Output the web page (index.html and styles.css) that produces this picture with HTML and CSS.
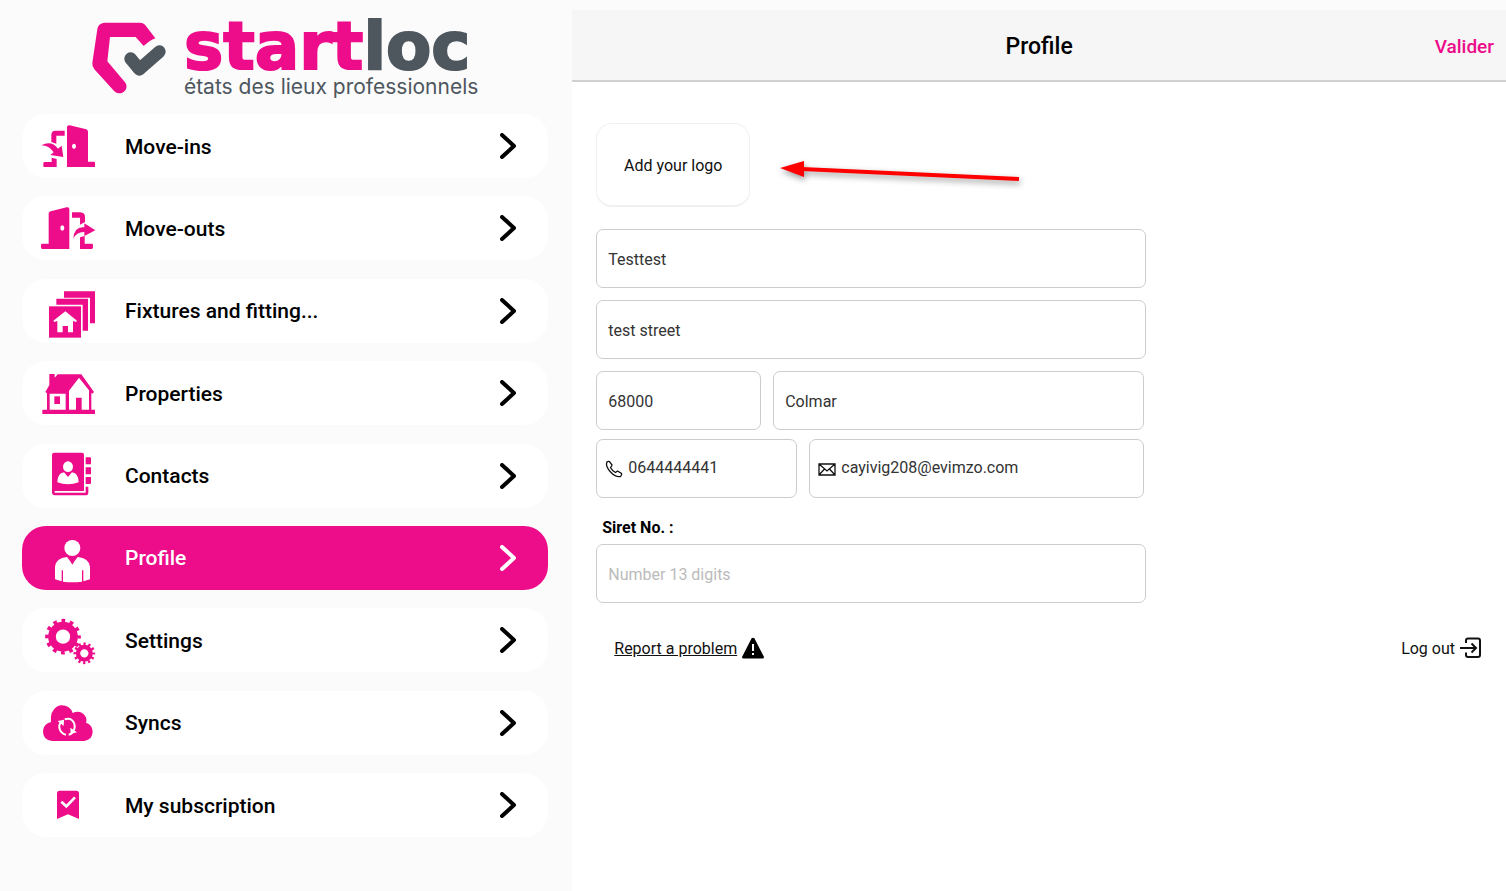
FILE: index.html
```html
<!DOCTYPE html>
<html lang="en">
<head>
  <meta charset="UTF-8">
  <meta name="viewport" content="width=device-width, initial-scale=1.0">
  <title>Startloc - Profile</title>
  <link rel="stylesheet" href="styles.css">
</head>
<body>
  <div class="app">
    <aside class="sidebar">
      <div class="logo">
        <svg class="logo-mark" viewBox="26 36 222 216" aria-hidden="true">
          <path class="pink" d="M63 38H170Q179 38 185 44L216 85Q203 89 181 108L157 81H80L72 154L125 217Q133 228 127 239Q120 250 107 250Q99 250 93 244L33 178Q26 170 27 158L42 58Q44 40 63 38Z"/>
          <path d="M142 146L168 178L228 125" fill="none" stroke="#4e565e" stroke-width="38" stroke-linecap="round" stroke-linejoin="round"/>
        </svg>
        <div class="logo-text">
          <div class="logo-name">start<span>loc</span></div>
          <div class="logo-tagline">états des lieux professionnels</div>
        </div>
      </div>

      <nav class="menu">
        <a href="#" class="menu-item">
          <svg class="menu-icon" viewBox="54 12 180 192">
            <path d="M141 51Q142 45 149 46L199 58Q204 60 204 65V155H222Q225 155 225 159V171H141Z"/>
            <path d="M94 96V75Q94 62 107 62H134V77H109V101Z"/>
            <path d="M64 106Q94 90 114 116L125 107L130 141L91 135L101 127Q87 106 64 106Z"/>
            <path d="M95 143L110 147V171H72Q70 171 70 168V159Q70 156 74 156H95Z"/>
            <ellipse class="hole" cx="162" cy="109" rx="6" ry="8"/>
          </svg>
          <span class="menu-label">Move-ins</span>
          <svg class="chevron" viewBox="0 0 16 26"><path d="M2 2L14 13L2 24"/></svg>
        </a>
        <a href="#" class="menu-item">
          <svg class="menu-icon" viewBox="54 259 180 192">
            <path d="M86 311Q87 307 92 305L140 293Q148 291 148 299V418H67Q63 418 63 413V406Q63 402 67 402H86Z"/>
            <path d="M156 308H181Q195 309 195 322V337L180 345V324H156Z"/>
            <path d="M160 387Q162 350 193 353V341L226 362L193 379V367Q170 366 160 387Z"/>
            <path d="M180 383L194 379V402H215Q219 402 219 406V413Q219 418 215 418H180Z"/>
            <ellipse class="hole" cx="127" cy="355" rx="6" ry="8"/>
          </svg>
          <span class="menu-label">Move-outs</span>
          <svg class="chevron" viewBox="0 0 16 26"><path d="M2 2L14 13L2 24"/></svg>
        </a>
        <a href="#" class="menu-item">
          <svg class="menu-icon" viewBox="54 12 180 192">
            <path d="M132 49H225V145H210V68H132Z"/>
            <path d="M109 71H204V167H188V89H109Z"/>
            <path d="M87 94H183V188H87Z"/>
            <path class="hole" d="M136 109L171 137L168 141L159 138V172H144V153H128V172H112V138L103 141L100 137Z"/>
          </svg>
          <span class="menu-label">Fixtures and fitting...</span>
          <svg class="chevron" viewBox="0 0 16 26"><path d="M2 2L14 13L2 24"/></svg>
        </a>
        <a href="#" class="menu-item">
          <svg class="menu-icon" viewBox="54 259 180 192">
            <path d="M88 298H104V309L113 299H184L222 352L217 357L214 354V405H225V418H67V405H81V356L76 352L88 331Z"/>
            <path class="hole" d="M89 357H137V405H89ZM177 309L207 347V405H185V369H168V405H147V348Z"/>
            <path d="M103 365H120V388H103Z"/>
          </svg>
          <span class="menu-label">Properties</span>
          <svg class="chevron" viewBox="0 0 16 26"><path d="M2 2L14 13L2 24"/></svg>
        </a>
        <a href="#" class="menu-item">
          <svg class="menu-icon" viewBox="54 11 180 192">
            <path d="M103 37H186Q192 37 192 43V152H104V157H197V139H205V158Q205 165 198 165H105Q96 165 96 156V44Q96 37 103 37Z"/>
            <path d="M197 51H210Q213 51 213 54V72H197ZM197 81H213V102H197ZM197 110H213V128Q213 131 210 131H197Z"/>
            <ellipse class="hole" cx="144" cy="79" rx="15" ry="16"/>
            <path class="hole" d="M112 126Q112 99 132 96L144 110L156 96Q176 99 176 126Q144 138 112 126Z"/>
          </svg>
          <span class="menu-label">Contacts</span>
          <svg class="chevron" viewBox="0 0 16 26"><path d="M2 2L14 13L2 24"/></svg>
        </a>
        <a href="#" class="menu-item active">
          <svg class="menu-icon" viewBox="54 258 180 192">
            <circle cx="157" cy="324" r="24"/>
            <path d="M105 418V380Q107 355 141 351Q150 362 157 374Q164 362 173 351Q207 355 210 380V418L190 424V391H186V425Q157 429 129 425V391H125V424Z"/>
          </svg>
          <span class="menu-label">Profile</span>
          <svg class="chevron" viewBox="0 0 16 26"><path d="M2 2L14 13L2 24"/></svg>
        </a>
        <a href="#" class="menu-item">
          <svg class="menu-icon gears" viewBox="54 11 180 192">
            <circle cx="129" cy="97" r="33" stroke-width="23"/>
            <circle cx="129" cy="97" r="48" stroke-width="11" pathLength="24" stroke-dasharray="0.9 1.1" stroke-dashoffset="0.45"/>
            <circle cx="193" cy="147" r="19" stroke-width="13"/>
            <circle cx="193" cy="147" r="28" stroke-width="9" pathLength="24" stroke-dasharray="0.9 1.1" stroke-dashoffset="0.45"/>
          </svg>
          <span class="menu-label">Settings</span>
          <svg class="chevron" viewBox="0 0 16 26"><path d="M2 2L14 13L2 24"/></svg>
        </a>
        <a href="#" class="menu-item">
          <svg class="menu-icon" viewBox="54 258 180 192">
            <path d="M96 408Q69 406 69 379Q70 357 93 351Q89 319 110 305Q127 296 145 306Q155 313 158 324Q181 314 195 332Q202 342 198 353Q217 359 218 379Q218 404 193 408Z"/>
            <path class="sync" d="M138 389A24 24 0 0 1 122 352M134 343Q155 336 163 356M146 389Q154 388 160 380M163 356Q166 366 162 376"/>
            <path class="hole" d="M113 348L132 344L131 363ZM171 382L152 387L151 368Z"/>
          </svg>
          <span class="menu-label">Syncs</span>
          <svg class="chevron" viewBox="0 0 16 26"><path d="M2 2L14 13L2 24"/></svg>
        </a>
        <a href="#" class="menu-item">
          <svg class="menu-icon" viewBox="54 25 180 192">
            <path d="M119 78H169Q177 78 177 86V163L144 149L111 163V86Q111 78 119 78Z"/>
            <path class="tick" d="M124 111L139 125L165 98"/>
          </svg>
          <span class="menu-label">My subscription</span>
          <svg class="chevron" viewBox="0 0 16 26"><path d="M2 2L14 13L2 24"/></svg>
        </a>
      </nav>
    </aside>

    <main class="main">
      <header class="header">
        <h1>Profile</h1>
        <button type="submit" form="profile-form" class="btn-submit">Valider</button>
      </header>

      <div class="content">
        <div class="logo-row">
          <button type="button" class="btn-logo">Add your logo</button>
          <svg class="arrow" viewBox="0 0 244 40" aria-hidden="true">
            <path d="M22 13L239 23" stroke="#f00" stroke-width="4"/>
            <path d="M0 12L24 5V21Z" fill="#f00"/>
          </svg>
        </div>

        <form id="profile-form" class="profile-form">
          <input type="text" class="field" name="name" aria-label="Name" value="Testtest">
          <input type="text" class="field" name="street" aria-label="Street" value="test street">
          <div class="form-row city-row">
            <input type="text" class="field" name="zip" aria-label="Zip code" value="68000">
            <input type="text" class="field" name="city" aria-label="City" value="Colmar">
          </div>
          <div class="form-row contact-row">
            <label class="field icon-field">
              <svg viewBox="0 0 18 18"><path d="M2 2Q3 1 4.500 1.500L7 5Q7 6 5.500 7.500Q7 10.500 10.500 12.500L12.500 11L16.500 13.500Q17 15 15.500 16.500Q11 17.500 6 12.500Q0 6.500 2 2Z"/></svg>
              <input type="tel" name="phone" aria-label="Phone" value="0644444441">
            </label>
            <label class="field icon-field">
              <svg viewBox="0 0 18 18"><path d="M1 4H17V15H1ZM1 4L9 11L17 4M1 15L6.500 9M17 15L11.500 9"/></svg>
              <input type="email" name="email" aria-label="Email" value="cayivig208@evimzo.com">
            </label>
          </div>
          <label class="siret-label" for="siret">Siret No. :</label>
          <input type="text" class="field" id="siret" name="siret" placeholder="Number 13 digits">
        </form>

        <div class="actions">
          <a href="#" class="report">
            <span>Report a problem</span>
            <svg viewBox="0 0 22 22"><path d="M9.500 1.500Q11 0 12.500 1.500L22 20Q22 21.500 20.500 21.500H1.500Q0 21.500 0 20Z"/><path d="M11 7V14M11 16V18" stroke="#fff" stroke-width="2"/></svg>
          </a>
          <button type="button" class="logout">
            <span>Log out</span>
            <svg viewBox="0 0 22 22"><path d="M6 6V3.500Q6 1.500 8 1.500H18Q20 1.500 20 3.500V18Q20 20 18 20H8Q6 20 6 18V15.500M0 11H16M11.500 6.500L16 11L11.500 15.500"/></svg>
          </button>
        </div>
      </div>
    </main>
  </div>
</body>
</html>
```
FILE: styles.css
```css
* {
  box-sizing: border-box;
}
body {
  margin: 0;
  font-family: Roboto, sans-serif;
  font-size: 16px;
  color: #111;
  background-color: #fbfbfb;
}
button {
  font-family: inherit;
  border: none;
  background: none;
  padding: 0;
  cursor: pointer;
}
.app {
  display: grid;
  grid-template-columns: 38% 1fr;
  min-height: 100vh;
  padding-top: 10px;
}

/* sidebar */
.sidebar {
  display: flex;
  flex-direction: column;
  padding: 10px 24px 54px 22px;
}
.logo {
  display: flex;
  justify-content: center;
  gap: 18px;
  height: 94px;
}
.logo-mark {
  width: 74px;
  height: 72px;
  margin-top: 2px;
}
.pink {
  fill: #ed0c8a;
}
.logo-name {
  font-family: "DejaVu Sans", sans-serif;
  font-size: 66px;
  font-weight: 700;
  line-height: 54px;
  color: #ed0c8a;
  -webkit-text-stroke: 2px #ed0c8a;
}
.logo-name span {
  color: #4e565e;
  -webkit-text-stroke-color: #4e565e;
}
.logo-tagline {
  font-family: Inter, sans-serif;
  font-size: 21px;
  line-height: 26px;
  color: #4e565e;
  white-space: nowrap;
}
.menu {
  flex: 1;
  display: flex;
  flex-direction: column;
  justify-content: space-between;
}
.menu-item {
  display: flex;
  align-items: center;
  height: 64px;
  padding: 0 32px 0 16px;
  border-radius: 24px;
  background-color: #fff;
  color: #000;
  font-size: 21px;
  font-weight: 500;
  text-decoration: none;
}
.menu-icon {
  width: 60px;
  height: 64px;
  margin-right: 27px;
  fill: #ed0c8a;
}
.menu-icon .hole {
  fill: #fff;
}
.gears {
  fill: none;
  stroke: #ed0c8a;
}
.menu-icon .sync {
  fill: none;
  stroke: #fff;
  stroke-width: 6;
}
.menu-icon .tick {
  fill: none;
  stroke: #fff;
  stroke-width: 8;
}
.menu-label {
  flex: 1;
  padding-top: 1px;
}
.chevron {
  width: 16px;
  height: 26px;
  fill: none;
  stroke: #000;
  stroke-width: 4;
  stroke-linecap: round;
  stroke-linejoin: round;
}
.active {
  background-color: #ed0c8a;
  color: #fff;
}
.active .menu-icon {
  fill: #fff;
}
.active .chevron {
  stroke: #fff;
}

/* main */
.main {
  background-color: #fff;
}
.header {
  display: grid;
  grid-template-columns: 1fr auto 1fr;
  align-items: center;
  height: 72px;
  padding: 3px 12px 0;
  background-color: #f6f6f6;
  border-bottom: 2px solid #d0d0d0;
}
.header h1 {
  grid-column: 2;
  margin: 0;
  font-size: 23px;
  font-weight: 500;
  color: #000;
}
.btn-submit {
  justify-self: end;
  font-size: 19px;
  font-weight: 500;
  color: #ed0c8a;
}
.content {
  padding: 41px 24px;
}
.logo-row {
  display: flex;
  align-items: center;
  gap: 30px;
  margin-bottom: 22px;
}
.btn-logo {
  width: 154px;
  height: 84px;
  padding-top: 2px;
  border: 1px solid #f0f0f0;
  border-bottom-width: 2px;
  border-radius: 16px;
  font-size: 16px;
  color: #111;
}
.arrow {
  width: 244px;
  height: 40px;
  margin-top: 22px;
  filter: drop-shadow(1px 3px 3px rgba(0, 0, 0, 0.4));
}
.profile-form {
  max-width: 550px;
}
.field {
  display: block;
  width: 100%;
  height: 59px;
  margin-bottom: 12px;
  padding: 2px 11px 0;
  border: 1px solid #ccc;
  border-radius: 7px;
  background-color: #fff;
  font-family: inherit;
  font-size: 16px;
  color: #333;
}
.field::placeholder {
  color: #bbb;
}
.form-row {
  display: grid;
  gap: 12px;
  padding-right: 2px;
}
.form-row .field {
  margin-bottom: 9px;
}
.city-row {
  grid-template-columns: minmax(0, 4fr) minmax(0, 9fr);
}
.contact-row {
  grid-template-columns: minmax(0, 3fr) minmax(0, 5fr);
}
.form-row .icon-field {
  display: flex;
  align-items: center;
  gap: 5px;
  padding: 0 8px;
}
.icon-field svg {
  flex: none;
  width: 18px;
  height: 18px;
  fill: none;
  stroke: #111;
  stroke-width: 1.3;
}
.icon-field input {
  flex: 1;
  min-width: 0;
  padding: 0 0 2px;
  border: none;
  background: none;
  font-family: inherit;
  font-size: 16px;
  color: #333;
}
.siret-label {
  display: block;
  padding: 11px 6px 6px;
  font-size: 16px;
  font-weight: 700;
  line-height: 20px;
  color: #000;
}
.actions {
  display: flex;
  justify-content: space-between;
  padding: 22px 0 0 18px;
}
.report,
.logout {
  display: flex;
  align-items: center;
  gap: 5px;
  font-size: 16px;
  color: #111;
}
.report svg,
.logout svg {
  width: 22px;
  height: 22px;
}
.logout svg {
  fill: none;
  stroke: #111;
  stroke-width: 2;
}
```
